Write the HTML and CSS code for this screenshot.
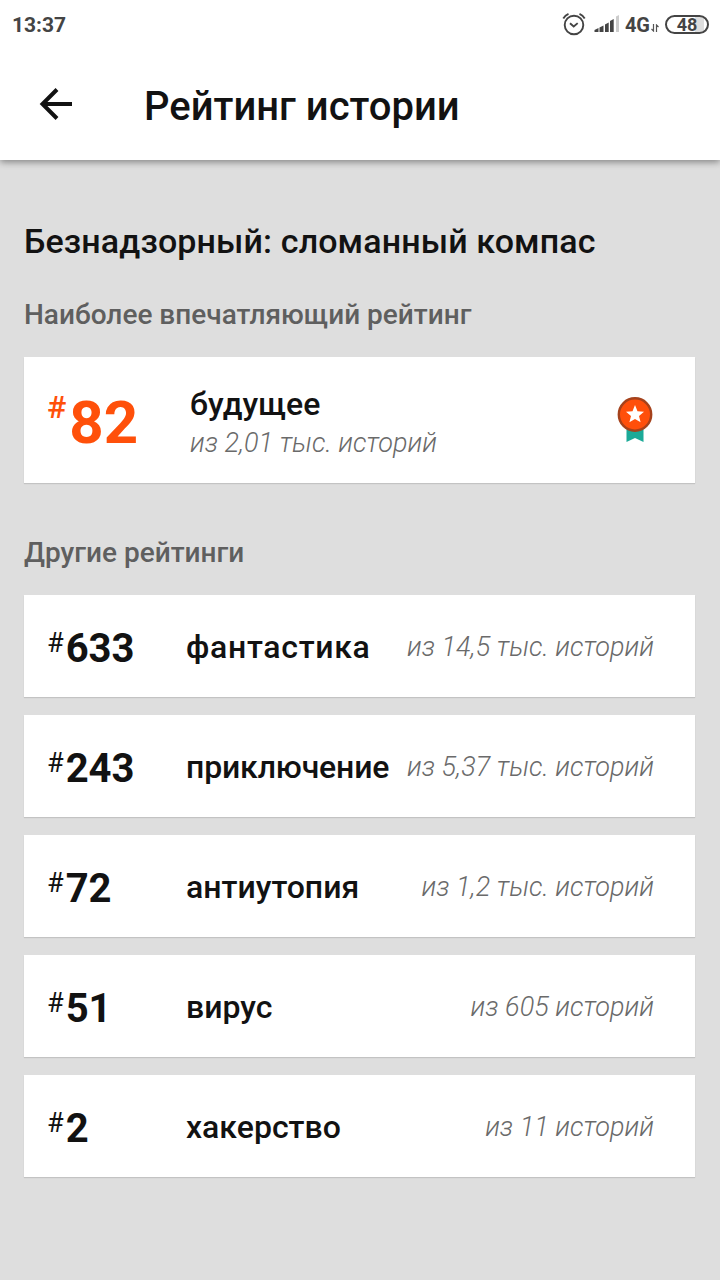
FILE: index.html
```html
<!DOCTYPE html>
<html lang="ru">
<head>
    <meta charset="UTF-8">
    <meta name="viewport" content="width=device-width, initial-scale=1.0">
    <title>Рейтинг истории</title>
    <link rel="stylesheet" href="styles.css">
</head>
<body>
    <header class="header">
        <div class="status-bar">
            <span class="clock">13:37</span>
            <div class="status-icons">
                <svg class="alarm" width="24" height="24" viewBox="0 0 24 24" fill="none" stroke="#444" stroke-width="1.9">
                    <circle cx="12" cy="13" r="9.300"/>
                    <path d="M1.300 6.500Q3 3.300 6.500 1.800M22.700 6.500Q21 3.300 17.500 1.800M8 11.300l3.700 3.200 4-3.400"/>
                </svg>
                <svg class="signal" width="26" height="20" viewBox="0 0 26 20" fill="#444">
                    <path d="M.5 18v-2l4-2v4zM5.500 18v-4.500l4-2V18zM11 18v-7.500l3.700-2V18zM16 18V7l3.700-2v13z"/>
                    <path d="M22 18V2.500L25 1v17z" fill="#ccc"/>
                </svg>
                <span class="network">4G</span>
                <svg class="data" width="8" height="8" viewBox="0 0 8 8" fill="none" stroke="#555" stroke-width="1.200">
                    <path d="M2.500 0v7L.5 5M5.500 8V1l2 2"/>
                </svg>
                <span class="battery">48</span>
            </div>
        </div>
        <div class="toolbar">
            <svg class="back" width="34" height="34" viewBox="0 0 34 34" fill="none" stroke="#121212" stroke-width="4">
                <path d="M33 17H4M18 2.500 3.500 17 18 31.500"/>
            </svg>
            <h1>Рейтинг истории</h1>
        </div>
    </header>

    <main class="content">
        <h2>Безнадзорный: сломанный компас</h2>

        <h3 class="best-title">Наиболее впечатляющий рейтинг</h3>
        <div class="card best">
            <div class="rank"><span class="hash">#</span><span class="number">82</span></div>
            <div class="info">
                <div class="tag">будущее</div>
                <div class="total">из 2,01 тыс. историй</div>
            </div>
            <svg class="medal" width="36" height="46" viewBox="0 0 36 46">
                <path d="M9.500 31h17v14l-8.500-4-8.500 4z" fill="#1caa98"/>
                <circle cx="18" cy="17.500" r="16.200" fill="#ff4f0b" stroke="#a5421c" stroke-width="2.400"/>
                <path d="M18 8l2.500 6.200 6.500.5-5 4.200 1.600 6.400-5.600-3.400-5.600 3.400 1.600-6.400-5-4.200 6.500-.5z" fill="#fff"/>
            </svg>
        </div>

        <h3 class="other-title">Другие рейтинги</h3>
        <div class="list">
            <div class="card row">
                <div class="rank"><span class="hash">#</span><span class="number">633</span></div>
                <div class="tag wide">фантастика</div>
                <div class="total">из 14,5 тыс. историй</div>
            </div>
            <div class="card row">
                <div class="rank"><span class="hash">#</span><span class="number">243</span></div>
                <div class="tag narrow">приключение</div>
                <div class="total">из 5,37 тыс. историй</div>
            </div>
            <div class="card row">
                <div class="rank"><span class="hash">#</span><span class="number">72</span></div>
                <div class="tag">антиутопия</div>
                <div class="total">из 1,2 тыс. историй</div>
            </div>
            <div class="card row">
                <div class="rank"><span class="hash">#</span><span class="number">51</span></div>
                <div class="tag">вирус</div>
                <div class="total">из 605 историй</div>
            </div>
            <div class="card row">
                <div class="rank"><span class="hash">#</span><span class="number">2</span></div>
                <div class="tag">хакерство</div>
                <div class="total">из 11 историй</div>
            </div>
        </div>
    </main>
</body>
</html>
```
FILE: styles.css
```css
* {
    margin: 0;
    padding: 0;
    box-sizing: border-box;
}

body {
    font-family: Roboto, sans-serif;
    background-color: #dedede;
    color: #121212;
    min-height: 100vh;
}

svg {
    display: block;
    flex-shrink: 0;
}

.header {
    height: 160px;
    background-color: #fff;
    box-shadow: 0 2px 7px rgba(0, 0, 0, 0.42);
}

.status-bar {
    display: flex;
    align-items: center;
    justify-content: space-between;
    height: 48px;
    padding: 0 11px 0 12px;
    color: #444;
}

.clock {
    padding-top: 1px;
    font-size: 21px;
    font-weight: 700;
}

.status-icons {
    display: flex;
    align-items: center;
}

.signal {
    margin-left: 8px;
}

.network {
    margin-left: 5px;
    padding-top: 1px;
    font-size: 20px;
    font-weight: 700;
}

.data {
    margin: 8px 6px 0 1px;
}

.battery {
    width: 44px;
    height: 19px;
    border: 2px solid #444;
    border-radius: 10px;
    background: linear-gradient(to right, #fff 28px, #ddd 28px, #ddd 37px, #fff 37px);
    font-size: 18px;
    font-weight: 700;
    line-height: 15px;
    text-align: center;
}

.toolbar {
    display: flex;
    align-items: center;
    height: 112px;
    padding-left: 39px;
}

.toolbar h1 {
    margin-left: 71px;
    padding-top: 4px;
    font-size: 40px;
    font-weight: 500;
}

.content {
    padding: 60px 25px 0 24px;
}

h2 {
    font-size: 34px;
    font-weight: 500;
    line-height: 42px;
    letter-spacing: 0.12px;
}

h3 {
    color: #5f5f5f;
    font-size: 28px;
    font-weight: 500;
    line-height: 34px;
}

.best-title {
    margin: 36px 0 25px;
}

.other-title {
    margin: 53px 0 25px;
}

.card {
    display: flex;
    align-items: center;
    padding: 0 41px 0 24px;
    background-color: #fff;
    box-shadow: 0 1px 1px rgba(0, 0, 0, 0.12);
}

.rank {
    display: flex;
    align-items: flex-start;
    flex-shrink: 0;
    padding-top: 5px;
    font-weight: 700;
}

.hash {
    margin-left: -1px;
    font-weight: 400;
}

.tag {
    padding-top: 2px;
    font-size: 32px;
    font-weight: 500;
    line-height: 38px;
}

.wide {
    letter-spacing: 0.7px;
}

.narrow {
    letter-spacing: -0.15px;
}

.total {
    padding-top: 1px;
    color: #6a6a6a;
    font-size: 27px;
    font-style: italic;
    font-weight: 300;
    line-height: 38px;
}

.best {
    height: 126px;
}

.best .rank {
    width: 142px;
    color: #ff500a;
}

.best .info {
    padding-top: 4px;
}

.best .hash {
    font-size: 32px;
    font-weight: 500;
    line-height: 38px;
}

.best .number {
    margin-left: 3px;
    font-size: 60px;
    line-height: 70px;
}

.medal {
    margin: 0 1px 0 auto;
}

.list {
    display: flex;
    flex-direction: column;
    gap: 18px;
}

.row {
    height: 102px;
}

.row .rank {
    width: 138px;
}

.row .hash {
    font-size: 27px;
    line-height: 36px;
}

.row .number {
    margin-left: 2px;
    font-size: 40px;
    line-height: 48px;
}

.row .total {
    margin-left: auto;
    white-space: nowrap;
}
```
